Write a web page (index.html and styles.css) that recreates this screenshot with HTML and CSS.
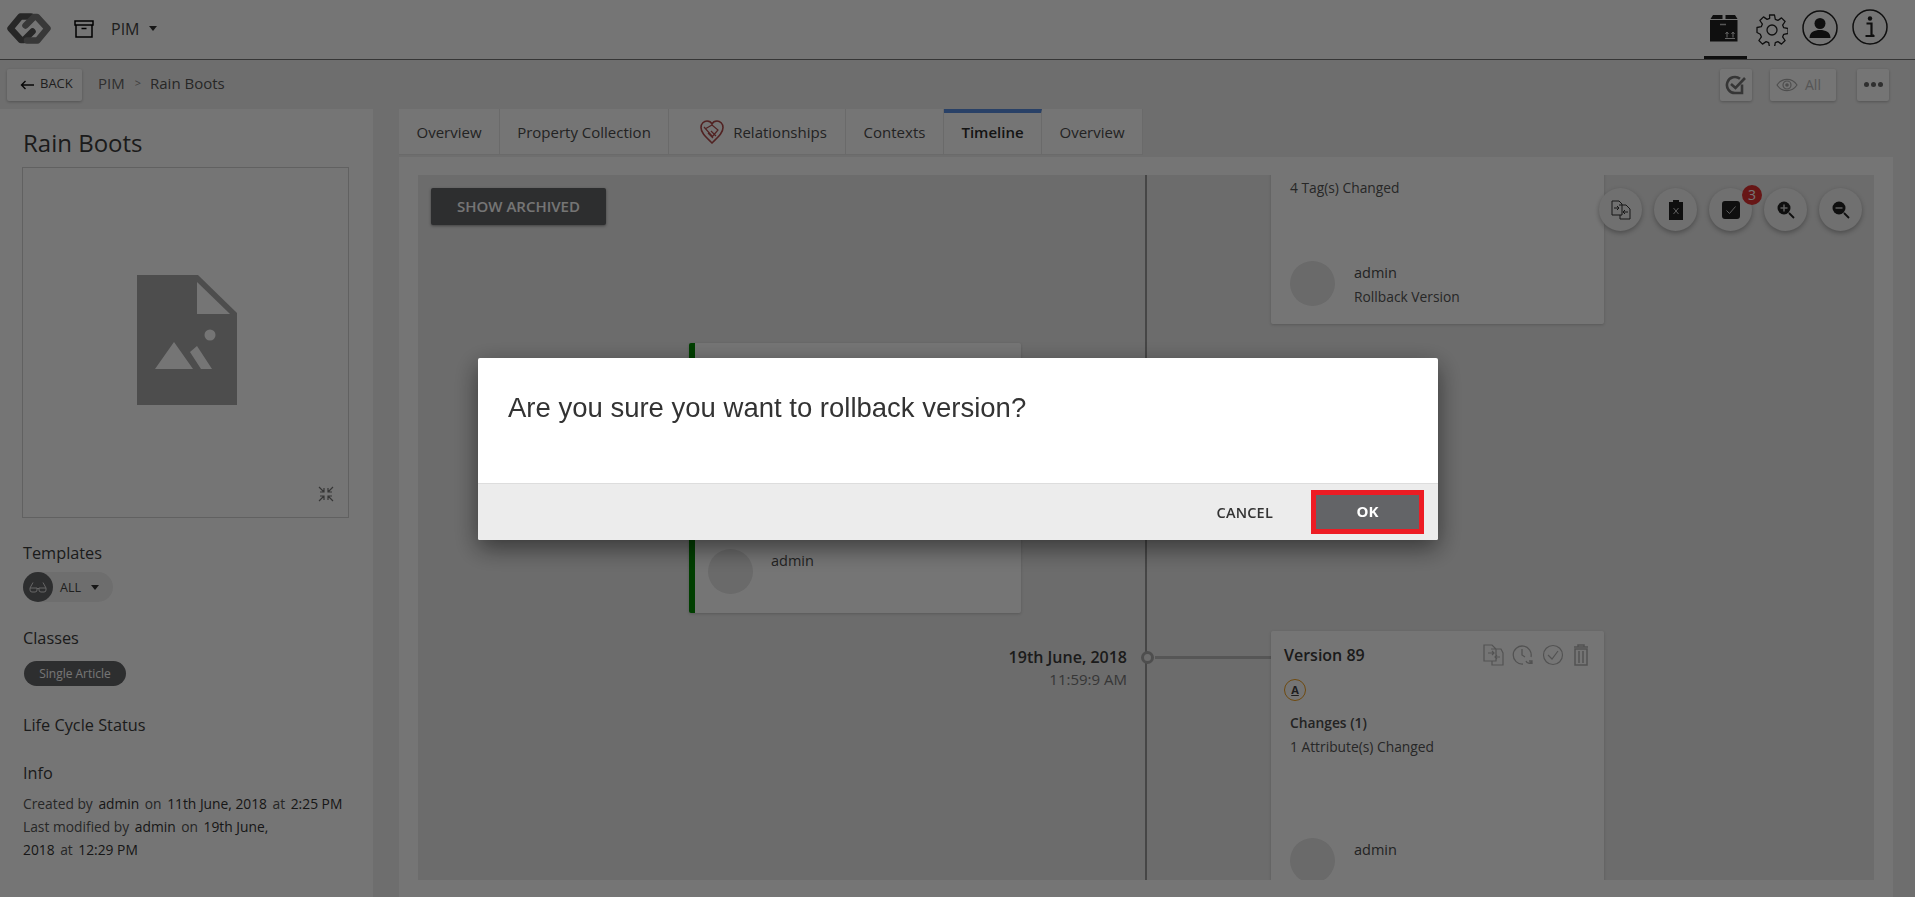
FILE: index.html
```html
<!DOCTYPE html>
<html lang="en">
<head>
<meta charset="utf-8">
<title>PIM - Rain Boots</title>
<link rel="stylesheet" href="styles.css">
</head>
<body>
<div class="app">
  <header class="topbar">
    <svg class="logo" viewBox="0 0 44 31" width="44" height="31"><path d="M24 3.500H13.500L3.500 15.500 14 27H17L25.500 18.500" fill="none" stroke="#555" stroke-width="6.500" stroke-linejoin="round" stroke-linecap="round"/><path d="M20 27.500H30.500L40.500 15.500 30 4H27L18.500 12.500" fill="none" stroke="#7a7a7a" stroke-width="6.500" stroke-linejoin="round" stroke-linecap="round"/></svg>
    <svg class="archive" viewBox="0 0 20 18" width="20" height="18"><path d="M1 1h18v4H1zM2 5v12h16V5M7.500 8.500h5" fill="none" stroke="#000" stroke-width="1.500"/></svg>
    <span class="module">PIM</span>
    <span class="caret"></span>
    <div class="topicons">
      <div class="topicon active">
        <svg viewBox="0 0 28 28" width="28" height="28"><path d="M3 0H12.500V4H.5zM15.500 0H25L27.500 4H15.500zM0 5H27.500V26.500H0z" fill="#222"/><path d="M10 9.500H16" stroke="#bbb" stroke-width="1.500"/><path d="M15 23.500H25M17 22.500v-5M23 22.500v-5M15.500 19l1.500-2 1.500 2M21.500 19l1.500-2 1.500 2" stroke="#ddd" stroke-width="1" fill="none"/></svg>
      </div>
      <svg class="gear" viewBox="0 0 32 32" width="32" height="32"><path d="M13.500 1h5l.8 4.300 2.600 1.100 3.600-2.500 3.600 3.600-2.500 3.600 1.100 2.600 4.300.8v5l-4.300.8-1.100 2.600 2.500 3.600-3.600 3.600-3.600-2.500-2.600 1.100-.8 4.300h-5l-.8-4.300-2.600-1.100-3.600 2.500-3.600-3.600 2.500-3.600-1.100-2.600L1 18.500v-5l4.300-.8 1.100-2.600-2.500-3.600 3.600-3.600 3.600 2.500 2.600-1.100z" fill="none" stroke="#222" stroke-width="1.300" stroke-linejoin="round"/><circle cx="16" cy="16" r="5" fill="none" stroke="#222" stroke-width="1.300"/></svg>
      <svg class="user" viewBox="0 0 36 36" width="36" height="36"><circle cx="18" cy="18" r="17" fill="none" stroke="#222" stroke-width="1.500"/><circle cx="18" cy="13.500" r="5.500" fill="#222"/><path d="M7.500 28c0-6 5-8 10.500-8s10.500 2 10.500 8z" fill="#222"/></svg>
      <svg class="info" viewBox="0 0 36 36" width="36" height="36"><circle cx="18" cy="18" r="17" fill="none" stroke="#222" stroke-width="1.500"/><circle cx="18" cy="9.500" r="2.200" fill="#222"/><path d="M14.500 14.500h5v12h2.500M13.500 27h9" fill="none" stroke="#222" stroke-width="2.200"/></svg>
    </div>
  </header>

  <nav class="subbar">
    <button class="btn back"><svg viewBox="0 0 14 10" width="14" height="10"><path d="M14 5H1.500M5.500 1L1.500 5l4 4" fill="none" stroke="#111" stroke-width="1.400"/></svg><span class="backtext">BACK</span></button>
    <div class="crumbs"><span class="crumb">PIM</span><span class="sep">&gt;</span><span class="crumb cur">Rain Boots</span></div>
    <div class="subactions">
      <button class="btn square"><svg viewBox="0 0 22 20" width="22" height="20"><path d="M17 9.500V18H10a8 8 0 1 1 5-14.200" fill="none" stroke="#777" stroke-width="2.600"/><path d="M6 9l4.500 4L20 3" fill="none" stroke="#777" stroke-width="2.600"/></svg></button>
      <button class="btn all"><svg viewBox="0 0 22 14" width="22" height="14"><path d="M1 7c5-7.500 15-7.500 20 0-5 7.500-15 7.500-20 0z" fill="none" stroke="#aaa" stroke-width="1.200"/><circle cx="11" cy="7" r="4" fill="none" stroke="#aaa" stroke-width="1.200"/><circle cx="11" cy="7" r="1.800" fill="#aaa"/></svg><span>All</span></button>
      <button class="btn square more"><i></i><i></i><i></i></button>
    </div>
  </nav>

  <div class="body">
    <aside class="side">
      <h1 class="title">Rain Boots</h1>
      <div class="preview">
        <svg class="docicon" viewBox="0 0 100 130" width="100" height="130"><path d="M0 0H61L100 38V130H0z" fill="#a8a8a8"/><path d="M60 7V39H93z" fill="#fff"/><circle cx="73" cy="60" r="5.500" fill="#fff"/><path d="M18 94L37 67 56 94zM53 77L60 71 75 94H64z" fill="#fff"/></svg>
        <svg class="shrink" viewBox="0 0 16 16" width="16" height="16"><path d="M1 1l5 5M6 2v4H2M15 1l-5 5M10 2v4h4M1 15l5-5M6 14v-4H2M15 15l-5-5M10 14v-4h4" fill="none" stroke="#777" stroke-width="1.200"/></svg>
      </div>
      <h2 class="label templates">Templates</h2>
      <div class="chip">
        <span class="chipicon"><svg viewBox="0 0 18 12" width="18" height="12"><path d="M1 7h7v2a2 2 0 0 1-2 2H3a2 2 0 0 1-2-2zM10 7h7v2a2 2 0 0 1-2 2h-3a2 2 0 0 1-2-2zM8 7.500h2M1 7L4 1.500M17 7L14 1.500" fill="none" stroke="#ddd" stroke-width="1"/></svg></span>
        <span class="chiptext">ALL</span>
        <span class="caret small"></span>
      </div>
      <h2 class="label classes">Classes</h2>
      <span class="pill">Single Article</span>
      <h2 class="label lifecycle">Life Cycle Status</h2>
      <h2 class="label infohead">Info</h2>
      <p class="meta">Created by <b>admin</b> on <b>11th June, 2018</b> at <b>2:25 PM</b><br>Last modified by <b>admin</b> on <b>19th June,</b><br><b class="flush">2018</b> at <b>12:29 PM</b></p>
    </aside>

    <main class="content">
      <div class="tabs">
        <div class="tab t1">Overview</div>
        <div class="tab t2">Property Collection</div>
        <div class="tab t3"><svg viewBox="0 0 24 24" width="24" height="24"><path d="M12 23C6 17 1 13 1 7.500 1 3.500 4 1 7 1c2 0 4 1 5 3 1-2 3-3 5-3 3 0 6 2.500 6 6.500C23 13 18 17 12 23z" fill="none" stroke="#b04a4a" stroke-width="1.600"/><path d="M5 9l7-4 6 5-6 7M8 13l5 5M11 11l5 5M4 7l8 9" fill="none" stroke="#b04a4a" stroke-width="1.200"/></svg><span>Relationships</span></div>
        <div class="tab t4">Contexts</div>
        <div class="tab t5 active">Timeline</div>
        <div class="tab t6">Overview</div>
      </div>
      <div class="panel">
        <div class="timeline">
          <button class="archived">SHOW ARCHIVED</button>
          <div class="axis"></div>

          <article class="card card-top">
            <div class="changed tagline">4 Tag(s) Changed</div>
            <div class="avatar"></div>
            <div class="who">admin</div>
            <div class="what">Rollback Version</div>
          </article>

          <article class="card card-green">
            <div class="avatar"></div>
            <div class="who">admin</div>
          </article>

          <div class="date"><div class="day">19th June, 2018</div><div class="time">11:59:9 AM</div></div>
          <div class="dot"></div>
          <div class="link"></div>

          <article class="card card-v89">
            <h3 class="vname">Version 89</h3>
            <div class="vicons">
              <svg viewBox="0 0 22 22" width="22" height="22"><path d="M2 1h8l4 4v12H2zM9 5h10l2 4v12H10v-4M6 9h6M10 7l2 2-2 2M18 13h-5M15 11l-2 2 2 2" fill="none" stroke="#b4b4b4" stroke-width="1.200"/></svg>
              <svg viewBox="0 0 22 22" width="22" height="22"><path d="M19 13A9 9 0 1 0 11 20M10 5v6l3 2M14 17c1 3 5 3 6 0M20 20v-3h-3" fill="none" stroke="#b4b4b4" stroke-width="1.300"/></svg>
              <svg viewBox="0 0 22 22" width="22" height="22"><circle cx="11" cy="11" r="9.500" fill="none" stroke="#b4b4b4" stroke-width="1.200"/><path d="M6 11l4 4 6-8" fill="none" stroke="#b4b4b4" stroke-width="1.200"/></svg>
              <svg viewBox="0 0 18 22" width="18" height="22"><path d="M2 3h14M6 3V1h6v2M3 5h12v16H3zM7 7v12M11 7v12" fill="none" stroke="#b4b4b4" stroke-width="1.500"/></svg>
            </div>
            <div class="abadge"><span>A</span></div>
            <div class="changes">Changes (1)</div>
            <div class="changed">1 Attribute(s) Changed</div>
            <div class="avatar"></div>
            <div class="who">admin</div>
          </article>
        </div>
      </div>
    </main>
  </div>

  <div class="fabs">
    <button class="fab"><svg viewBox="0 0 20 20" width="20" height="20"><path d="M1 1h7l3 3v11H1zM8 5h7l4 4v10H9v-4M3 8h5M6 6l2 2-2 2M17 12h-5M14 10l-2 2 2 2" fill="none" stroke="#333" stroke-width="1"/></svg></button>
    <button class="fab"><svg viewBox="0 0 14 20" width="14" height="20"><path d="M0 2h4V0h6v2h4v18H0z" fill="#222"/><path d="M4.500 8l5 6M9.500 8l-5 6" stroke="#ccc" stroke-width="1"/></svg></button>
    <button class="fab"><svg viewBox="0 0 18 18" width="18" height="18"><rect width="18" height="18" rx="3" fill="#222"/><path d="M4.500 9.500l3 3 6-7" fill="none" stroke="#ccc" stroke-width="1"/></svg><span class="badge">3</span></button>
    <button class="fab"><svg viewBox="0 0 18 18" width="18" height="18"><circle cx="7" cy="7" r="6.500" fill="#222"/><path d="M3.500 7h7M7 3.500v7" stroke="#ccc" stroke-width="1.500"/><path d="M12 12l5 5" stroke="#222" stroke-width="1.800"/></svg></button>
    <button class="fab"><svg viewBox="0 0 18 18" width="18" height="18"><circle cx="7" cy="7" r="6.500" fill="#222"/><path d="M3.500 7h7" stroke="#ccc" stroke-width="1.500"/><path d="M12 12l5 5" stroke="#222" stroke-width="1.800"/></svg></button>
  </div>
</div>

<div class="overlay">
  <div class="modal">
    <div class="msg">Are you sure you want to rollback version?</div>
    <div class="foot">
      <button class="cancel">CANCEL</button>
      <button class="ok">OK</button>
    </div>
  </div>
</div>
</body>
</html>
```
FILE: styles.css
```css
* { box-sizing: border-box; }
html, body { margin: 0; height: 100%; overflow: hidden; }
body { font-family: "Open Sans", "Liberation Sans", sans-serif; color: #444; background: #f0f0f0; }
button { font-family: inherit; border: 0; padding: 0; }
h1, h2, h3, p { margin: 0; font-weight: 400; }

.app { position: relative; width: 1915px; height: 897px; display: flex; flex-direction: column; }

/* header */
.topbar { height: 60px; flex: none; display: flex; align-items: center; background: #fff; border-bottom: 1px solid #777; padding-left: 7px; }
.logo { margin-top: -2px; }
.archive { margin-left: 23px; margin-top: -2px; }
.module { margin-left: 17px; font-size: 16px; color: #444; margin-top: -2px; }
.caret { width: 0; height: 0; margin-left: 10px; margin-top: -2px; border-left: 4.500px solid transparent; border-right: 4.500px solid transparent; border-top: 5px solid #333; }
.topicons { margin-left: auto; display: flex; align-items: center; height: 100%; padding-right: 27px; }
.topicon { width: 43px; height: 59px; padding: 15px 0 0 6px; border-bottom: 3px solid #222; }
.topicon svg { display: block; }
.gear { margin-left: 9px; margin-top: 0; }
.user { margin-left: 14px; margin-top: -3px; }
.info { margin-left: 14px; margin-top: -5px; }

/* sub bar */
.subbar { height: 49px; flex: none; display: flex; align-items: center; padding: 0 26px 0 7px; background: #f0f0f0; }
.btn { display: flex; align-items: center; height: 32px; background: #fff; border-radius: 2px; box-shadow: 0 1px 3px rgba(0,0,0,.25); color: #444; }
.back { width: 75px; padding-left: 13px; gap: 6px; font-size: 13px; }
.backtext { margin-top: -3px; }
.crumbs { margin-left: 16px; margin-top: -4px; display: flex; align-items: center; font-size: 15px; color: #666; }
.sep { margin: 0 9px 0 10px; font-size: 11px; color: #888; }
.cur { color: #555; }
.subactions { margin-left: auto; display: flex; align-items: center; }
.square { width: 32px; justify-content: center; }
.all { width: 66px; margin: 0 21px 0 18px; padding-left: 6px; gap: 7px; font-size: 14px; color: #bbb; }
.more { gap: 2px; }
.more i { width: 5px; height: 5px; border-radius: 50%; background: #666; }

/* body */
.body { flex: 1; min-height: 0; display: flex; }
.side { width: 373px; flex: none; background: #fff; padding-left: 22px; }
.title { margin: 17px 0 8px 1px; font-size: 24px; line-height: 33px; color: #3c3c3c; }
.preview { position: relative; width: 327px; height: 351px; border: 1px solid #d4d4d4; display: flex; align-items: center; justify-content: center; }
.docicon { margin: -6px 0 0 2px; }
.shrink { position: absolute; right: 14px; bottom: 15px; }
.label { margin-left: 1px; font-size: 16.300px; line-height: 20px; color: #3c3c3c; }
.templates { margin-top: 25px; }
.chip { display: flex; align-items: center; width: 90px; height: 30px; margin: 9px 0 0 1px; border-radius: 15px; background: #efefef; }
.chipicon { width: 30px; height: 30px; border-radius: 50%; background: #636467; display: flex; align-items: center; justify-content: center; }
.chiptext { margin-left: 7px; font-size: 12.500px; color: #444; }
.caret.small { margin-left: 10px; margin-top: 0; }
.classes { margin-top: 26px; }
.pill { display: block; width: 102px; height: 25px; margin: 13px 0 0 2px; border-radius: 13px; background: #636467; color: #fff; font-size: 12px; line-height: 25px; text-align: center; }
.lifecycle { margin-top: 29px; }
.infohead { margin-top: 28px; }
.meta { margin: 9px 0 0 1px; font-size: 13.800px; line-height: 23px; color: #555; }
.meta b { font-weight: 400; color: #333; margin: 0 2px; }
.meta .flush { margin-left: 0; }

.content { margin-left: 26px; width: 1494px; display: flex; flex-direction: column; }
.tabs { height: 46px; display: flex; flex: none; }
.tab { display: flex; align-items: center; justify-content: center; background: #fff; border-right: 1px solid #e8e8e8; border-bottom: 1px solid #e8e8e8; font-size: 15px; color: #4c4c4c; padding-top: 1px; }
.t1 { width: 101px; }
.t2 { width: 169px; }
.t3 { width: 177px; gap: 9px; padding-left: 13px; }
.t4 { width: 98px; }
.t5 { width: 98px; border-top: 4px solid #5a8fe0; font-weight: 600; color: #2c2c2c; padding-bottom: 3px; padding-top: 0; }
.t6 { width: 101px; }
.panel { flex: 1; min-height: 0; margin-top: 2px; background: #fff; padding: 18px 19px 17px; }
.timeline { position: relative; height: 100%; background: #ebebeb; overflow: hidden; }
.archived { position: absolute; left: 13px; top: 13px; width: 175px; height: 37px; padding-bottom: 2px; border-radius: 2px; background: #636467; color: #fff; font-size: 15px; font-weight: 600; box-shadow: 0 1px 3px rgba(0,0,0,.4); }
.axis { position: absolute; left: 727px; top: 0; bottom: 0; width: 2px; background: #999; }

.card { position: absolute; background: #fff; border-radius: 2px; box-shadow: 0 1px 3px rgba(0,0,0,.18); font-size: 13.800px; color: #555; }
.avatar { position: absolute; width: 45px; height: 45px; border-radius: 50%; background: #e6e6e6; }
.who { position: absolute; font-size: 14.500px; line-height: 20px; color: #4c4c4c; }
.what { position: absolute; font-size: 13.800px; line-height: 18px; color: #555; }
.changed { font-size: 13.800px; line-height: 18px; color: #555; }

.card-top { left: 853px; top: -30px; width: 333px; height: 179px; }
.tagline { position: absolute; left: 19px; top: 34px; }
.card-top .avatar { left: 19px; top: 116px; }
.card-top .who { top: 118px; left: 83px; }
.card-top .what { left: 83px; top: 143px; }

.card-green { left: 271px; top: 168px; width: 332px; height: 270px; border-left: 6px solid #008a00; }
.card-green .avatar { left: 13px; top: 206px; }
.card-green .who { left: 76px; top: 208px; }

.date { position: absolute; right: 747px; top: 471px; text-align: right; }
.day { font-size: 16px; line-height: 22px; font-weight: 600; color: #3c3c3c; }
.time { font-size: 15px; line-height: 22px; color: #777; }
.dot { position: absolute; left: 723px; top: 476px; width: 13px; height: 13px; border: 3px solid #aaa; border-radius: 50%; background: #ebebeb; }
.link { position: absolute; left: 737px; top: 481px; width: 116px; height: 3px; background: #bbb; }

.card-v89 { left: 853px; top: 456px; width: 333px; height: 300px; }
.vname { position: absolute; left: 13px; top: 13px; font-size: 16px; line-height: 22px; font-weight: 600; color: #3c3c3c; }
.vicons { position: absolute; right: 14px; top: 13px; display: flex; align-items: center; gap: 8px; }
.abadge { position: absolute; left: 13px; top: 48px; width: 22px; height: 22px; border: 1px solid #f0a020; border-radius: 50%; text-align: center; font-size: 11px; font-weight: 700; line-height: 19px; color: #444; }
.abadge span { text-decoration: underline; }
.changes { position: absolute; left: 19px; top: 82px; font-size: 13.800px; line-height: 20px; font-weight: 600; color: #4c4c4c; }
.card-v89 .changed { position: absolute; left: 19px; top: 107px; }
.card-v89 .avatar { left: 19px; top: 207px; }
.card-v89 .who { left: 83px; top: 209px; }

/* floating tools */
.fabs { position: absolute; left: 1599px; top: 188px; display: flex; gap: 12px; }
.fab { position: relative; width: 43px; height: 43px; border-radius: 50%; background: #f4f4f4; box-shadow: 0 2px 5px rgba(0,0,0,.3); display: flex; align-items: center; justify-content: center; }
.badge { position: absolute; right: -10px; top: -3px; width: 20px; height: 20px; border-radius: 50%; background: #e03030; color: #fff; font-size: 14px; line-height: 20px; text-align: center; }

/* modal */
.overlay { position: fixed; inset: 0; background: rgba(0,0,0,.541); display: flex; justify-content: center; align-items: flex-start; padding-top: 358px; padding-left: 1px; }
.modal { width: 960px; height: 182px; background: #fff; border-radius: 2px; box-shadow: 0 8px 24px rgba(0,0,0,.5); display: flex; flex-direction: column; overflow: hidden; }
.msg { height: 125px; flex: none; padding: 34px 30px 0; font-family: "Liberation Sans", Arial, sans-serif; font-size: 27.500px; line-height: 32px; color: #333; }
.foot { flex: 1; display: flex; align-items: center; justify-content: flex-end; padding: 0 14px 0 0; background: #ececec; border-top: 1px solid #ddd; }
.cancel { background: none; font-size: 14.500px; font-weight: 600; color: #333; margin-right: 38px; letter-spacing: .2px; }
.ok { width: 113px; height: 44px; padding-bottom: 2px; background: #636467; border: 5px solid #ed1c24; color: #fff; font-size: 15px; font-weight: 700; }
```
